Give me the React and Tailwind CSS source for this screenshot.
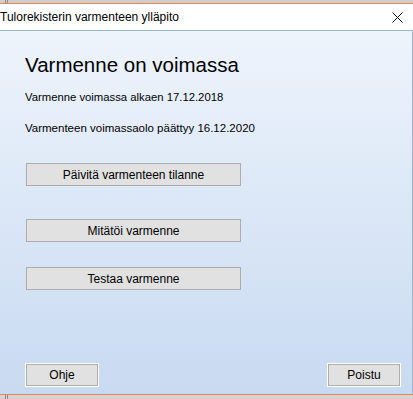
export default function App() {
  const font = { fontFamily: '"Liberation Sans", Arial, sans-serif' };
  const btn =
    "h-[23px] bg-[#e1e1e1] border border-[#adadad] text-[12px] text-[#000] flex items-center justify-center";
  return (
    <div
      className="w-[413px] h-[399px] flex flex-col bg-[#d9d9d9] overflow-hidden"
      style={font}
    >
      <div className="h-[3px] bg-[#cfcfcf] flex shrink-0">
        <div className="ml-[5px] w-[1px] bg-[#8a8a8a]" />
        <div className="ml-[1px] w-[1px] bg-[#8a8a8a]" />
      </div>
      <div className="flex-1 flex flex-col border-y border-[#f0834f] min-h-0">
        <div className="h-[26px] bg-white flex items-center justify-between shrink-0">
          <span className="text-[12px] text-black leading-none pl-0">
            Tulorekisterin varmenteen ylläpito
          </span>
          <svg width="11" height="11" viewBox="0 0 11 11" className="mr-[10px]">
            <path d="M0.5 0.5 L10.5 10.5 M10.5 0.5 L0.5 10.5" stroke="#111" strokeWidth="1" />
          </svg>
        </div>
        <div className="flex-1 flex flex-col border-t border-r border-[#9fb3ca] bg-gradient-to-b from-[#eef4fc] to-[#c8daf1] pl-[25px] pr-[11px]">
          <div className="text-[20.5px] text-black leading-none mt-[24px]">
            Varmenne on voimassa
          </div>
          <div className="text-[11.3px] text-black leading-none mt-[16px]">
            Varmenne voimassa alkaen 17.12.2018
          </div>
          <div className="text-[11.5px] text-black leading-none mt-[20px]">
            Varmenteen voimassaolo päättyy 16.12.2020
          </div>
          <div className="flex flex-col w-[215px] ml-[1px]">
            <div className={btn + " mt-[29px]"}>Päivitä varmenteen tilanne</div>
            <div className={btn + " mt-[33px]"}>Mitätöi varmenne</div>
            <div className={btn + " mt-[25px]"}>Testaa varmenne</div>
          </div>
          <div className="mt-auto mb-[7px] flex justify-between">
            <div className="w-[74px] h-[24px] border border-white">
              <div className="w-full h-full bg-[#e1e1e1] border border-[#adadad] text-[12px] text-black flex items-center justify-center">
                Ohje
              </div>
            </div>
            <div className="w-[74px] h-[24px] border border-white">
              <div className="w-full h-full bg-[#e1e1e1] border border-[#adadad] text-[12px] text-black flex items-center justify-center">
                Poistu
              </div>
            </div>
          </div>
        </div>
      </div>
      <div className="h-[4px] bg-[#d4d4d4] flex shrink-0">
        <div className="ml-[5px] w-[1px] bg-[#8a8a8a]" />
        <div className="ml-[1px] w-[1px] bg-[#8a8a8a]" />
      </div>
    </div>
  );
}
